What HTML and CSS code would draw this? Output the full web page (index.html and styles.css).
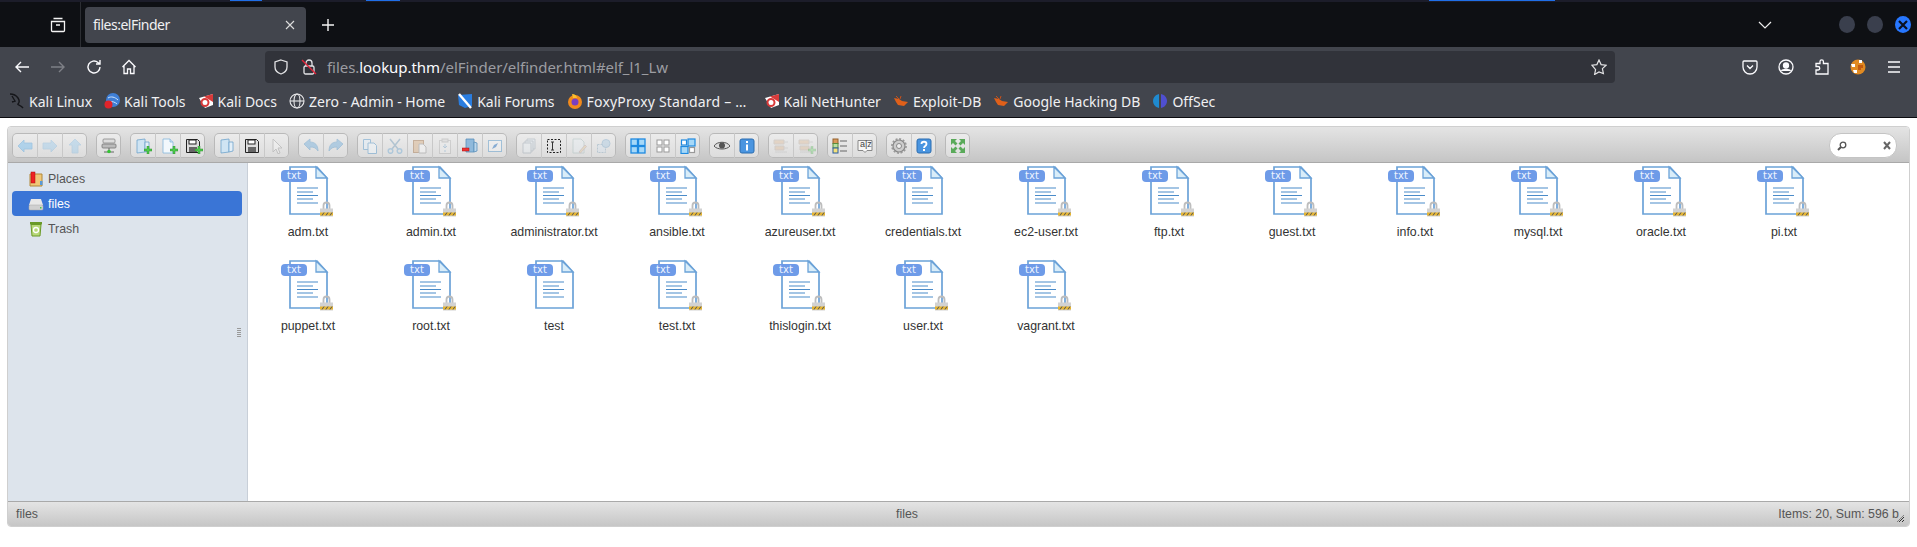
FILE: index.html
```html
<!DOCTYPE html>
<html lang="en">
<head>
    <meta charset="UTF-8">
    <title>files:elFinder</title>
    <link rel="stylesheet" href="styles.css">
</head>
<body>
    <svg class="sprites" aria-hidden="true">
        <symbol id="i-back" viewBox="0 0 16 16"><path d="M1 8l6-6v3h8v6H7v3z" fill="#7cc0f0" stroke="#5aa3dc" stroke-width=".8"/></symbol>
        <symbol id="i-forward" viewBox="0 0 16 16"><path d="M15 8L9 2v3H1v6h8v3z" fill="#7cc0f0" stroke="#5aa3dc" stroke-width=".8"/></symbol>
        <symbol id="i-up" viewBox="0 0 16 16"><path d="M8 1l6 6h-3v8H5V7H2z" fill="#7cc0f0" stroke="#5aa3dc" stroke-width=".8"/></symbol>
        <symbol id="i-net" viewBox="0 0 16 16"><rect x="2" y="1" width="12" height="4" rx="1" fill="#ddd" stroke="#888" stroke-width=".8"/><rect x="1" y="6" width="14" height="4" rx="1" fill="#bbb" stroke="#777" stroke-width=".8"/><path d="M8 10v3M3 14h10" stroke="#666"/><circle cx="8" cy="13.500" r="1.800" fill="#35c435"/></symbol>
        <symbol id="i-plus" viewBox="0 0 8 8"><path d="M3 0h2v3h3v2H5v3H3V5H0V3h3z" fill="#4ccb4c" stroke="#2c8c2c" stroke-width=".5"/></symbol>
        <symbol id="i-folder" viewBox="0 0 16 16"><path d="M2 2l8-1v13l-8 1z" fill="#cfe4f3" stroke="#6ea3cc" stroke-width=".8"/><path d="M10 4h4v9l-4 1z" fill="#e3eff8" stroke="#6ea3cc" stroke-width=".8"/></symbol>
        <symbol id="i-file" viewBox="0 0 16 16"><path d="M3 1h7l3 3v11H3z" fill="#f2f8fc" stroke="#86b6dc" stroke-width=".8"/><path d="M10 1v3h3" fill="#cfe4f3" stroke="#86b6dc" stroke-width=".8"/></symbol>
        <symbol id="i-save" viewBox="0 0 16 16"><path d="M1.500 1.500h11l2 2v11h-13z" fill="#ddd" stroke="#222"/><rect x="4" y="2" width="7" height="4" fill="#fff" stroke="#222"/><rect x="4" y="9" width="8" height="5" fill="#666"/></symbol>
        <symbol id="i-cursor" viewBox="0 0 16 16"><path d="M4 1l9 9H9l2 5-2 .8L7 11l-3 3z" fill="#fff" stroke="#777"/></symbol>
        <symbol id="i-undo" viewBox="0 0 16 16"><path d="M1 6l6-5v3c5 0 8 3 8 9-2-3-4-4-8-4v3z" fill="#7cb2dc" stroke="#5f9ac8" stroke-width=".8"/></symbol>
        <symbol id="i-redo" viewBox="0 0 16 16"><path d="M15 6L9 1v3c-5 0-8 3-8 9 2-3 4-4 8-4v3z" fill="#7cb2dc" stroke="#5f9ac8" stroke-width=".8"/></symbol>
        <symbol id="i-copy" viewBox="0 0 16 16"><path d="M1.500 1.500h7v10h-7z" fill="#e4f0f9" stroke="#5f9ccb"/><path d="M6 5h6l2.500 2.500v8H6z" fill="#f2f8fc" stroke="#5f9ccb"/></symbol>
        <symbol id="i-cut" viewBox="0 0 16 16"><path d="M3 1l8 10M13 1L5 11" stroke="#7fa3bd" stroke-width="1.500" fill="none"/><circle cx="3.500" cy="13" r="2.300" fill="none" stroke="#7fb0d4" stroke-width="1.500"/><circle cx="12.500" cy="13" r="2.300" fill="none" stroke="#7fb0d4" stroke-width="1.500"/></symbol>
        <symbol id="i-paste" viewBox="0 0 16 16"><rect x="1.500" y="2.500" width="10" height="12" fill="#d9b38c" stroke="#a57b52"/><path d="M7 6h4l3 3v6H7z" fill="#f7f7f7" stroke="#999"/></symbol>
        <symbol id="i-dup" viewBox="0 0 16 16"><rect x="2.500" y="2.500" width="11" height="13" fill="#f2f2f2" stroke="#999"/><rect x="5" y="1" width="6" height="3" fill="#ccc" stroke="#888"/><path d="M8 6v3M6 8l2 2 2-2M8 14v-2" stroke="#4f8dbf" fill="none"/></symbol>
        <symbol id="i-rm" viewBox="0 0 16 16"><path d="M4 1h8v13H4z" fill="#8fb9db" stroke="#5a8fba" stroke-width=".8"/><path d="M12 4l3 1v8l-3 1z" fill="#bcd7ec" stroke="#5a8fba" stroke-width=".8"/><rect x="0" y="10" width="7" height="3" fill="#e33" stroke="#a11" stroke-width=".5"/></symbol>
        <symbol id="i-empty" viewBox="0 0 16 16"><rect x="1.500" y="2.500" width="13" height="11" fill="#f5f5f5" stroke="#5f9ccb"/><path d="M5 11l2-4 4-2-2 4z" fill="#2c76c4"/></symbol>
        <symbol id="i-stack" viewBox="0 0 16 16"><path d="M6 1h8v10H6z" fill="#dbe9f4" stroke="#789"/><path d="M4 3h8v10H4z" fill="#dbe9f4" stroke="#789"/><path d="M2 5h8v10H2z" fill="#e8f1f8" stroke="#789"/></symbol>
        <symbol id="i-rename" viewBox="0 0 16 16"><rect x="1.500" y="1.500" width="13" height="13" fill="none" stroke="#222" stroke-dasharray="2 1.500"/><path d="M5 4h3M5 12h3M6.500 4v8" stroke="#333" fill="none"/></symbol>
        <symbol id="i-edit" viewBox="0 0 16 16"><path d="M2 1h8l3 3v11H2z" fill="#e8f1f8" stroke="#8aa"/><path d="M8 14l6-7 1.500 1.500L9.500 15z" fill="#e6c275" stroke="#a88"/></symbol>
        <symbol id="i-resize" viewBox="0 0 16 16"><rect x="1.500" y="6.500" width="8" height="8" fill="#cfe2f1" stroke="#5f8cab" stroke-dasharray="2 1"/><circle cx="10" cy="5.500" r="4" fill="#8fbde0" stroke="#4f8dbf"/></symbol>
        <symbol id="i-gridfull" viewBox="0 0 16 16"><g fill="#a6d8f8" stroke="#1f8ae0" stroke-width="1.300"><rect x="1" y="1" width="6.500" height="6.500"/><rect x="8.500" y="1" width="6.500" height="6.500"/><rect x="1" y="8.500" width="6.500" height="6.500"/><rect x="8.500" y="8.500" width="6.500" height="6.500"/></g></symbol>
        <symbol id="i-gridnone" viewBox="0 0 16 16"><g fill="#fff" stroke="#999"><rect x="2" y="2" width="5" height="5"/><rect x="9" y="2" width="5" height="5"/><rect x="2" y="9" width="5" height="5"/><rect x="9" y="9" width="5" height="5"/></g></symbol>
        <symbol id="i-gridmix" viewBox="0 0 16 16"><g stroke-width="1.200"><rect x="1.500" y="2" width="5" height="5" fill="#fff" stroke="#1f8ae0"/><rect x="8" y="1" width="7" height="7" fill="#a6d8f8" stroke="#1f8ae0"/><rect x="1" y="8.500" width="7" height="7" fill="#a6d8f8" stroke="#1f8ae0"/><rect x="9.500" y="9.500" width="5" height="5" fill="#fff" stroke="#999"/></g></symbol>
        <symbol id="i-eye" viewBox="0 0 16 16"><path d="M0 8c3-5 13-5 16 0-3 4-13 4-16 0z" fill="#ddd" stroke="#555"/><circle cx="8" cy="7.500" r="3" fill="#555"/></symbol>
        <symbol id="i-info" viewBox="0 0 16 16"><rect x="1" y="1" width="14" height="14" rx="2" fill="#4a95e0" stroke="#2a6cb0"/><rect x="7" y="3" width="2" height="2" fill="#fff"/><rect x="7" y="6.500" width="2" height="6" fill="#fff"/></symbol>
        <symbol id="i-help" viewBox="0 0 16 16"><rect x="1" y="1" width="14" height="14" rx="2" fill="#4a95e0" stroke="#2a6cb0"/><path d="M5.500 6c0-3 5-3 5 0 0 2-2.500 2-2.500 4" fill="none" stroke="#fff" stroke-width="1.800"/><rect x="7" y="11" width="2" height="2" fill="#fff"/></symbol>
        <symbol id="i-arc" viewBox="0 0 16 16"><path d="M1 2h10v4H1zM2 8h9v4H2z" fill="#d9a878" stroke="#a98"/><path d="M2 14h12M11 4h4M11 10h4" stroke="#aaa"/></symbol>
        <symbol id="i-list" viewBox="0 0 16 16"><rect x="1" y="1" width="5" height="4.500" fill="#d99a5a" stroke="#94602c"/><rect x="1" y="5.500" width="5" height="4.500" fill="#b8e0a0" stroke="#5a8c3c"/><rect x="1" y="10" width="5" height="5" fill="#f6e27a" stroke="#2a5ca0"/><path d="M8 3h7M8 8h7M8 13h7" stroke="#666" fill="none"/></symbol>
        <symbol id="i-az" viewBox="0 0 16 16"><path d="M1 2.500h14v10H10l-2 2-2-2H1z" fill="#f7f7f7" stroke="#888"/></symbol>
        <symbol id="i-gear" viewBox="0 0 16 16"><circle cx="8" cy="8" r="6" fill="#ccc" stroke="#888" stroke-width="1.200"/><circle cx="8" cy="8" r="7" fill="none" stroke="#999" stroke-width="1.800" stroke-dasharray="2 1.660"/><circle cx="8" cy="8" r="2.500" fill="#eee" stroke="#888"/></symbol>
        <symbol id="i-full" viewBox="0 0 16 16"><g fill="#5aaa5a"><path d="M1 1h6L5 3l2.500 2.500-2 2L3 5 1 7zM15 1v6l-2-2-2.500 2.500-2-2L11 3 9 1zM1 15V9l2 2 2.500-2.500 2 2L5 13l2 2zM15 15H9l2-2-2.500-2.500 2-2L13 11l2-2z"/></g></symbol>
        <symbol id="i-page" viewBox="0 0 56 52">
            <path d="M10 2h27l10 11v36H10z" fill="#fff" stroke="#6ba2d8" stroke-width="1.700"/>
            <path d="M36 2v11h11z" fill="#d9edf9" stroke="#6ba2d8" stroke-width="1.300"/>
            <path d="M17 23h21M17 27h16M17 30.500h21M17 34h16M17 38h21" stroke="#4a8bc9" stroke-width="1.100" fill="none"/>
        </symbol>
        <symbol id="i-lock" viewBox="0 0 13 16">
            <path d="M3.500 8V4.500a3 3 0 0 1 6 0V8" fill="none" stroke="#bdbdbd" stroke-width="1.800"/>
            <rect x="0" y="7.500" width="13" height="8" fill="#d2d2d2"/>
            <path d="M0 11.500h13v3H0z" fill="#e6b530"/>
            <path d="M2 14.500l2-3M6 14.500l2-3M10 14.500l2-3" stroke="#555"/>
        </symbol>
    </svg>

    <div class="topstrip"><i class="seg seg-a"></i><i class="seg seg-b"></i><i class="seg seg-c"></i></div>

    <div class="tabbar">
        <svg class="tabs-btn" width="16" height="16" viewBox="0 0 16 16" fill="none" stroke="#f4f4f4" stroke-width="1.300"><path d="M3.500 1.500h9M1.500 4.500h13v9a1 1 0 0 1-1 1h-11a1 1 0 0 1-1-1zM6 8h4"/></svg>
        <i class="tabs-sep"></i>
        <div class="tab">
            <span class="tab-title">files:elFinder</span>
            <svg class="tab-x" width="10" height="10" viewBox="0 0 10 10" stroke="#ddd" stroke-width="1.100"><path d="M1 1l8 8M9 1l-8 8"/></svg>
        </div>
        <svg class="newtab" width="14" height="14" viewBox="0 0 14 14" stroke="#f4f4f4" stroke-width="1.400"><path d="M7 1v12M1 7h12"/></svg>
        <svg class="chevron" width="14" height="8" viewBox="0 0 14 8" fill="none" stroke="#eee" stroke-width="1.200"><path d="M1 1l6 6 6-6"/></svg>
        <div class="winbtns">
            <i class="winbtn"></i>
            <i class="winbtn"></i>
            <i class="winbtn winbtn-close"><svg width="10" height="10" viewBox="0 0 10 10" stroke="#0a1020" stroke-width="2.200"><path d="M1 1l8 8M9 1l-8 8"/></svg></i>
        </div>
    </div>

    <div class="navbar">
        <svg class="nav-ic ic-back" viewBox="0 0 16 16" fill="none" stroke="#fbfbfe" stroke-width="1.400"><path d="M15 8H2M7 3L2 8l5 5"/></svg>
        <svg class="nav-ic ic-fwd" viewBox="0 0 16 16" fill="none" stroke="#7e8087" stroke-width="1.400"><path d="M1 8h13M9 3l5 5-5 5"/></svg>
        <svg class="nav-ic ic-reload" viewBox="0 0 16 16" fill="none" stroke="#fbfbfe" stroke-width="1.400"><path d="M14 8a6 6 0 1 1-2-4.500L14 5M14 1v4h-4"/></svg>
        <svg class="nav-ic ic-home" viewBox="0 0 16 16" fill="none" stroke="#fbfbfe" stroke-width="1.300"><path d="M1.500 8L8 1.500 14.500 8M3 7v7.500h3.500V10h3v4.500H13V7"/></svg>
        <div class="urlbar">
            <svg class="url-ic" viewBox="0 0 16 16" fill="none" stroke="#e4e4e6" stroke-width="1.300"><path d="M8 1l6 2v5c0 3.500-3 6-6 7-3-1-6-3.500-6-7V3z"/></svg>
            <svg class="url-ic url-lock" viewBox="0 0 16 16" fill="none" stroke="#e4e4e6" stroke-width="1.300"><rect x="3" y="7" width="10" height="8" rx="1.500"/><path d="M5 7V4a3 3 0 0 1 6 0v3"/><path d="M1 1l14 14" stroke="#e0243a" stroke-width="1.400"/></svg>
            <div class="url-text">files.<b>lookup.thm</b>/elFinder/elfinder.html#elf_l1_Lw</div>
            <svg class="url-star" viewBox="0 0 16 16" fill="none" stroke="#e4e4e6" stroke-width="1.200"><path d="M8 1l2.100 4.600 5 .6-3.700 3.400 1 4.900L8 13l-4.400 2.500 1-4.900L.9 6.200l5-.6z"/></svg>
        </div>
        <svg class="nav-ic ic-pocket" viewBox="0 0 16 16" fill="none" stroke="#fbfbfe" stroke-width="1.300"><path d="M2 2h12a1 1 0 0 1 1 1v5a7 7 0 0 1-14 0V3a1 1 0 0 1 1-1zM5 6.500l3 3 3-3"/></svg>
        <svg class="nav-ic ic-account" viewBox="0 0 16 16" fill="none" stroke="#fbfbfe" stroke-width="1.300"><circle cx="8" cy="8" r="7"/><circle cx="8" cy="6.500" r="2.500" fill="#fbfbfe"/><path d="M3.500 12c1-2 8-2 9 0" fill="#fbfbfe"/></svg>
        <svg class="nav-ic ic-ext" viewBox="0 0 16 16" fill="none" stroke="#fbfbfe" stroke-width="1.300"><path d="M2 15V11h2a1.500 1.500 0 0 0 0-3.500H2V4.500h4V2.500a1.700 1.700 0 0 1 3.400 0v2H14V15z"/></svg>
        <svg class="nav-ic ic-fox" viewBox="0 0 16 16"><circle cx="8" cy="8" r="7.500" fill="#e08a22"/><path d="M1 5h4v3H2zM3 11h4v3H4zM9 1h3v3H9z" fill="#fff"/><path d="M8 6h5v3h-2v2H8z" fill="#c25a10"/></svg>
        <svg class="nav-ic ic-menu" viewBox="0 0 16 16" stroke="#fbfbfe" stroke-width="1.300"><path d="M2 3h12M2 8h12M2 13h12"/></svg>
    </div>

    <div class="bookmarks">
        <a class="bm"><svg class="fav" viewBox="0 0 16 16" fill="none" stroke="#15161a" stroke-width="1.400"><path d="M1 1c4 0 6 1 8 4s1 5 0 6 3 1 5 4M3 3l3 5-3 1"/></svg>Kali Linux</a>
        <a class="bm"><svg class="fav" viewBox="0 0 16 16"><circle cx="9" cy="7" r="7" fill="#3f7fd6"/><path d="M4 5c3-2 7-1 10 2M5 9c3-1 6 0 8 2" stroke="#cfe3fa" fill="none"/><circle cx="4.500" cy="11.500" r="4" fill="#e0242a"/></svg>Kali Tools</a>
        <a class="bm"><svg class="fav" viewBox="0 0 16 16"><path d="M1 5l14-4v11l-8 3z" fill="#fff"/><path d="M6 3.500L15 1v8z" fill="#d83a3a"/><circle cx="7" cy="9.500" r="3.500" fill="none" stroke="#d83a3a" stroke-width="2"/></svg>Kali Docs</a>
        <a class="bm"><svg class="fav" viewBox="0 0 16 16" fill="none" stroke="#e8e8ea" stroke-width="1.100"><circle cx="8" cy="8" r="7"/><ellipse cx="8" cy="8" rx="3" ry="7"/><path d="M1 8h14"/></svg>Zero - Admin - Home</a>
        <a class="bm"><svg class="fav" viewBox="0 0 16 16"><path d="M1 2l14-1v12l-7 2-6-3z" fill="#2a7de0"/><path d="M2 1l12 14" stroke="#fff" stroke-width="2.400"/></svg>Kali Forums</a>
        <a class="bm bm-foxy"><svg class="fav" viewBox="0 0 16 16"><circle cx="8" cy="9" r="7" fill="#f28a1c"/><path d="M5 1c3 0 5 2 5 4H6z" fill="#fbbe2c"/><circle cx="8" cy="9" r="3.500" fill="#7a3fc0"/></svg>FoxyProxy Standard – …</a>
        <a class="bm bm-hunter"><svg class="fav" viewBox="0 0 16 16"><path d="M1 5l14-4v11l-8 3z" fill="#fff"/><path d="M6 3.500L15 1v8z" fill="#d83a3a"/><circle cx="7" cy="9.500" r="3.500" fill="none" stroke="#d83a3a" stroke-width="2"/></svg>Kali NetHunter</a>
        <a class="bm"><svg class="fav" viewBox="0 0 16 16"><path d="M1 5l5 1 3 2 6 1-4 4-6-1-2-3z" fill="#e0601a"/><path d="M3 3l3 3M8 3L7 6" stroke="#c8501a"/></svg>Exploit-DB</a>
        <a class="bm"><svg class="fav" viewBox="0 0 16 16"><path d="M1 5l5 1 3 2 6 1-4 4-6-1-2-3z" fill="#e0601a"/><path d="M3 3l3 3M8 3L7 6" stroke="#c8501a"/></svg>Google Hacking DB</a>
        <a class="bm"><svg class="fav" viewBox="0 0 16 16"><path d="M7 1C3 2 1 5 1 8s2 6 6 7z" fill="#1f8ad0"/><path d="M9 1c4 1 6 4 6 7s-2 6-6 7z" fill="#4f4fd0"/></svg>OffSec</a>
    </div>

    <main class="page">
        <div class="elfinder">
            <div class="toolbar">
                <div class="tb-group">
                    <span class="tb-btn dim"><svg><use href="#i-back"/></svg></span>
                    <span class="tb-btn off"><svg><use href="#i-forward"/></svg></span>
                    <span class="tb-btn off"><svg><use href="#i-up"/></svg></span>
                </div>
                <div class="tb-group">
                    <span class="tb-btn"><svg><use href="#i-net"/></svg></span>
                </div>
                <div class="tb-group">
                    <span class="tb-btn plus"><svg><use href="#i-folder"/></svg><svg class="badge-plus"><use href="#i-plus"/></svg></span>
                    <span class="tb-btn plus"><svg><use href="#i-file"/></svg><svg class="badge-plus"><use href="#i-plus"/></svg></span>
                    <span class="tb-btn plus"><svg><use href="#i-save"/></svg><svg class="badge-plus"><use href="#i-plus"/></svg></span>
                </div>
                <div class="tb-group">
                    <span class="tb-btn"><svg><use href="#i-folder"/></svg></span>
                    <span class="tb-btn"><svg><use href="#i-save"/></svg></span>
                    <span class="tb-btn off"><svg><use href="#i-cursor"/></svg></span>
                </div>
                <div class="tb-group">
                    <span class="tb-btn dim"><svg><use href="#i-undo"/></svg></span>
                    <span class="tb-btn dim"><svg><use href="#i-redo"/></svg></span>
                </div>
                <div class="tb-group">
                    <span class="tb-btn dim"><svg><use href="#i-copy"/></svg></span>
                    <span class="tb-btn dim"><svg><use href="#i-cut"/></svg></span>
                    <span class="tb-btn dim"><svg><use href="#i-paste"/></svg></span>
                    <span class="tb-btn off"><svg><use href="#i-dup"/></svg></span>
                    <span class="tb-btn"><svg><use href="#i-rm"/></svg></span>
                    <span class="tb-btn dim"><svg><use href="#i-empty"/></svg></span>
                </div>
                <div class="tb-group">
                    <span class="tb-btn off"><svg><use href="#i-stack"/></svg></span>
                    <span class="tb-btn"><svg><use href="#i-rename"/></svg></span>
                    <span class="tb-btn off"><svg><use href="#i-edit"/></svg></span>
                    <span class="tb-btn off"><svg><use href="#i-resize"/></svg></span>
                </div>
                <div class="tb-group">
                    <span class="tb-btn"><svg><use href="#i-gridfull"/></svg></span>
                    <span class="tb-btn"><svg><use href="#i-gridnone"/></svg></span>
                    <span class="tb-btn"><svg><use href="#i-gridmix"/></svg></span>
                </div>
                <div class="tb-group">
                    <span class="tb-btn"><svg><use href="#i-eye"/></svg></span>
                    <span class="tb-btn"><svg><use href="#i-info"/></svg></span>
                </div>
                <div class="tb-group">
                    <span class="tb-btn off"><svg><use href="#i-arc"/></svg></span>
                    <span class="tb-btn off plus"><svg><use href="#i-arc"/></svg><svg class="badge-plus"><use href="#i-plus"/></svg></span>
                </div>
                <div class="tb-group">
                    <span class="tb-btn"><svg><use href="#i-list"/></svg></span>
                    <span class="tb-btn az"><svg><use href="#i-az"/></svg><em>a|z</em></span>
                </div>
                <div class="tb-group">
                    <span class="tb-btn"><svg><use href="#i-gear"/></svg></span>
                    <span class="tb-btn"><svg><use href="#i-help"/></svg></span>
                </div>
                <div class="tb-group">
                    <span class="tb-btn"><svg><use href="#i-full"/></svg></span>
                </div>
                <div class="search">
                    <svg width="10" height="10" viewBox="0 0 10 10" fill="none" stroke="#555" stroke-width="1.300"><circle cx="6" cy="4" r="2.800"/><path d="M4 6L1 9" stroke-width="2"/></svg>
                    <svg width="8" height="9" viewBox="0 0 8 9" stroke="#666" stroke-width="2"><path d="M1 1l6 7M7 1L1 8"/></svg>
                </div>
            </div>

            <div class="workzone">
                <nav class="sidebar">
                    <div class="tree-row">
                        <svg class="tree-ic" viewBox="0 0 16 16"><path d="M2 3h12v12H2z" fill="#f0c878" stroke="#b08838"/><rect x="3" y="1" width="4" height="11" fill="#e22" stroke="#a11" stroke-width=".5"/><rect x="12" y="10" width="2.500" height="4" fill="#5a9ad8"/></svg>
                        Places
                    </div>
                    <div class="tree-row is-active">
                        <svg class="tree-ic" viewBox="0 0 16 16"><path d="M3 3h10l2 6H1z" fill="#e8e8e8"/><rect x="1" y="9" width="14" height="5" rx="1" fill="#d0d0d0" stroke="#aaa" stroke-width=".5"/><rect x="12" y="11" width="1.500" height="1.500" fill="#4c4"/></svg>
                        files
                    </div>
                    <div class="tree-row">
                        <svg class="tree-ic" viewBox="0 0 16 16"><path d="M2 1h12v2.500H2z" fill="#6a9a28"/><path d="M3 3.500h10l-1 11.500H4z" fill="#b8d878" stroke="#6a9a28"/><circle cx="8" cy="9" r="2.500" fill="none" stroke="#fff" stroke-width="1.300"/></svg>
                        Trash
                    </div>
                    <i class="grip"></i>
                </nav>

                <section class="cwd">
                    <div class="file"><div class="file-ic"><svg class="page-ic"><use href="#i-page"/></svg><span class="kind">txt</span><svg class="lock-ic"><use href="#i-lock"/></svg></div><div class="file-name">adm.txt</div></div>
                    <div class="file"><div class="file-ic"><svg class="page-ic"><use href="#i-page"/></svg><span class="kind">txt</span><svg class="lock-ic"><use href="#i-lock"/></svg></div><div class="file-name">admin.txt</div></div>
                    <div class="file"><div class="file-ic"><svg class="page-ic"><use href="#i-page"/></svg><span class="kind">txt</span><svg class="lock-ic"><use href="#i-lock"/></svg></div><div class="file-name">administrator.txt</div></div>
                    <div class="file"><div class="file-ic"><svg class="page-ic"><use href="#i-page"/></svg><span class="kind">txt</span><svg class="lock-ic"><use href="#i-lock"/></svg></div><div class="file-name">ansible.txt</div></div>
                    <div class="file"><div class="file-ic"><svg class="page-ic"><use href="#i-page"/></svg><span class="kind">txt</span><svg class="lock-ic"><use href="#i-lock"/></svg></div><div class="file-name">azureuser.txt</div></div>
                    <div class="file"><div class="file-ic"><svg class="page-ic"><use href="#i-page"/></svg><span class="kind">txt</span></div><div class="file-name">credentials.txt</div></div>
                    <div class="file"><div class="file-ic"><svg class="page-ic"><use href="#i-page"/></svg><span class="kind">txt</span><svg class="lock-ic"><use href="#i-lock"/></svg></div><div class="file-name">ec2-user.txt</div></div>
                    <div class="file"><div class="file-ic"><svg class="page-ic"><use href="#i-page"/></svg><span class="kind">txt</span><svg class="lock-ic"><use href="#i-lock"/></svg></div><div class="file-name">ftp.txt</div></div>
                    <div class="file"><div class="file-ic"><svg class="page-ic"><use href="#i-page"/></svg><span class="kind">txt</span><svg class="lock-ic"><use href="#i-lock"/></svg></div><div class="file-name">guest.txt</div></div>
                    <div class="file"><div class="file-ic"><svg class="page-ic"><use href="#i-page"/></svg><span class="kind">txt</span><svg class="lock-ic"><use href="#i-lock"/></svg></div><div class="file-name">info.txt</div></div>
                    <div class="file"><div class="file-ic"><svg class="page-ic"><use href="#i-page"/></svg><span class="kind">txt</span><svg class="lock-ic"><use href="#i-lock"/></svg></div><div class="file-name">mysql.txt</div></div>
                    <div class="file"><div class="file-ic"><svg class="page-ic"><use href="#i-page"/></svg><span class="kind">txt</span><svg class="lock-ic"><use href="#i-lock"/></svg></div><div class="file-name">oracle.txt</div></div>
                    <div class="file"><div class="file-ic"><svg class="page-ic"><use href="#i-page"/></svg><span class="kind">txt</span><svg class="lock-ic"><use href="#i-lock"/></svg></div><div class="file-name">pi.txt</div></div>
                    <div class="file"><div class="file-ic"><svg class="page-ic"><use href="#i-page"/></svg><span class="kind">txt</span><svg class="lock-ic"><use href="#i-lock"/></svg></div><div class="file-name">puppet.txt</div></div>
                    <div class="file"><div class="file-ic"><svg class="page-ic"><use href="#i-page"/></svg><span class="kind">txt</span><svg class="lock-ic"><use href="#i-lock"/></svg></div><div class="file-name">root.txt</div></div>
                    <div class="file"><div class="file-ic"><svg class="page-ic"><use href="#i-page"/></svg><span class="kind">txt</span></div><div class="file-name">test</div></div>
                    <div class="file"><div class="file-ic"><svg class="page-ic"><use href="#i-page"/></svg><span class="kind">txt</span><svg class="lock-ic"><use href="#i-lock"/></svg></div><div class="file-name">test.txt</div></div>
                    <div class="file"><div class="file-ic"><svg class="page-ic"><use href="#i-page"/></svg><span class="kind">txt</span><svg class="lock-ic"><use href="#i-lock"/></svg></div><div class="file-name">thislogin.txt</div></div>
                    <div class="file"><div class="file-ic"><svg class="page-ic"><use href="#i-page"/></svg><span class="kind">txt</span><svg class="lock-ic"><use href="#i-lock"/></svg></div><div class="file-name">user.txt</div></div>
                    <div class="file"><div class="file-ic"><svg class="page-ic"><use href="#i-page"/></svg><span class="kind">txt</span><svg class="lock-ic"><use href="#i-lock"/></svg></div><div class="file-name">vagrant.txt</div></div>
                </section>
            </div>

            <div class="statusbar">
                <span>files</span>
                <span class="stat-mid">files</span>
                <span class="stat-size">Items: 20, Sum: 596 b</span>
                <i class="resize-grip"></i>
            </div>
        </div>
    </main>
</body>
</html>
```

FILE: styles.css
```css
* {
    box-sizing: border-box;
}
html, body {
    height: 100%;
}
body {
    margin: 0;
    overflow: hidden;
    background: #fff;
    font-family: "Liberation Sans", sans-serif;
}
.sprites {
    display: none;
}
svg {
    display: block;
    flex: none;
}

/* browser chrome */
.topstrip {
    display: flex;
    height: 2px;
    background: #1c1d2a;
}
.seg {
    display: block;
    height: 1px;
    background: #1f6fe8;
}
.seg-a { margin-left: 230px; width: 32px; }
.seg-b { margin-left: 104px; width: 34px; }
.seg-c { margin-left: 1029px; width: 126px; }

.tabbar {
    display: flex;
    align-items: center;
    height: 45px;
    background: #0e1014;
    font-family: "Noto Sans", sans-serif;
}
.tabs-btn {
    margin-left: 50px;
}
.tabs-sep {
    display: block;
    width: 1px;
    height: 45px;
    margin-left: 14px;
    background: #2c2e33;
}
.tab {
    display: flex;
    align-items: center;
    justify-content: space-between;
    width: 221px;
    height: 36px;
    margin-left: 4px;
    padding: 0 11px 0 8px;
    border-radius: 4px;
    background: #42454d;
    color: #f0f0f2;
    font-size: 14px;
}
.tab-title {
    letter-spacing: -.5px;
}
.newtab {
    margin-left: 15px;
}
.chevron {
    margin-left: 1423px;
}
.winbtns {
    display: flex;
    gap: 12px;
    margin-left: 67px;
}
.winbtn {
    display: flex;
    align-items: center;
    justify-content: center;
    width: 16px;
    height: 17px;
    border-radius: 50%;
    background: #3a3f4d;
}
.winbtn-close {
    background: #2777ff;
}

.navbar {
    display: flex;
    align-items: flex-start;
    height: 40px;
    padding-top: 4px;
    background: #42454d;
}
.nav-ic {
    width: 16px;
    height: 16px;
    margin-top: 8px;
}
.ic-back { margin-left: 14px; }
.ic-fwd { margin-left: 20px; }
.ic-reload { margin-left: 20px; }
.ic-home { margin-left: 19px; }
.ic-pocket { margin-left: 127px; }
.ic-account { margin-left: 20px; }
.ic-ext { margin-left: 20px; }
.ic-fox { margin-left: 20px; }
.ic-menu { margin-left: 20px; }

.urlbar {
    display: flex;
    align-items: center;
    width: 1350px;
    height: 32px;
    margin-left: 128px;
    border-radius: 4px;
    background: #31333a;
}
.url-ic {
    width: 16px;
    height: 16px;
    margin-left: 8px;
}
.url-lock {
    margin-left: 12px;
}
.url-text {
    flex: 1;
    margin-left: 10px;
    color: #9c9da2;
    font: 15px "Noto Sans", sans-serif;
    letter-spacing: -.05px;
}
.url-text b {
    color: #fbfbfe;
    font-weight: 400;
}
.url-star {
    width: 16px;
    height: 16px;
    margin-right: 8px;
}

.bookmarks {
    display: flex;
    align-items: center;
    gap: 12px;
    height: 31px;
    padding: 0 0 2px 9px;
    border-bottom: 1px solid #0c0c10;
    background: #42454d;
    color: #f0f0f2;
    font: 14px "Noto Sans", sans-serif;
}
.bm {
    display: flex;
    align-items: center;
    gap: 4px;
    white-space: nowrap;
}
.bm-foxy {
    letter-spacing: .2px;
}
.bm-hunter {
    margin-left: 5px;
}
.fav {
    width: 16px;
    height: 16px;
}

/* elfinder */
.page {
    padding: 8px 7px 0;
}
.elfinder {
    position: relative;
    display: flex;
    flex-direction: column;
    height: 401px;
    border: 1px solid #cfcfcf;
    border-radius: 4px;
    overflow: hidden;
    background: #fff;
}
.toolbar {
    display: flex;
    flex: none;
    gap: 9px;
    height: 36px;
    padding: 6px 12px 0 4px;
    border-bottom: 1px solid #a9a9a9;
    background: linear-gradient(#e4e4e4, #c5c5c5);
}
.tb-group {
    display: flex;
    height: 25px;
    border-radius: 5px;
    overflow: hidden;
    box-shadow: inset 0 0 0 1px #b9b9b9;
    background: linear-gradient(#ececec, #dcdcdc);
}
.tb-btn {
    position: relative;
    display: flex;
    align-items: center;
    justify-content: center;
    width: 25px;
    height: 25px;
    border-left: 1px solid #c8c8c8;
}
.tb-btn:first-child {
    border-left: 0;
}
.tb-btn svg {
    width: 16px;
    height: 16px;
}
.tb-btn.off svg {
    opacity: .3;
}
.tb-btn.dim svg {
    opacity: .5;
}
.tb-btn .badge-plus {
    position: absolute;
    left: 14px;
    top: 13px;
    width: 8px;
    height: 8px;
}
.tb-btn.az em {
    position: absolute;
    color: #444;
    font: 9px "Liberation Sans", sans-serif;
    top: 6px;
    left: 7px;
}
.search {
    display: flex;
    align-items: center;
    justify-content: space-between;
    width: 68px;
    height: 25px;
    margin-left: auto;
    padding: 0 5px 0 7px;
    border: 1px solid #c4c4c4;
    border-radius: 12px;
    background: #fff;
}

.workzone {
    display: flex;
    flex: 1;
    min-height: 0;
}
.sidebar {
    position: relative;
    flex: none;
    width: 240px;
    padding: 3px 5px 0 4px;
    border-right: 1px solid #c8cfd8;
    background: #dde4ec;
    color: #555;
    font-size: 12.35px;
}
.tree-row {
    display: flex;
    align-items: center;
    height: 25px;
    padding-left: 16px;
    border-radius: 4px;
}
.tree-row.is-active {
    background: #3a75d6;
    color: #fff;
}
.tree-ic {
    width: 16px;
    height: 16px;
    margin-right: 4px;
}
.grip {
    position: absolute;
    right: 6px;
    top: 165px;
    width: 4px;
    height: 9px;
    background: repeating-linear-gradient(#999 0 1px, #dde4ec 1px 2px);
}

.cwd {
    display: grid;
    flex: 1;
    grid-template-columns: repeat(13, 120px);
    column-gap: 3px;
    grid-auto-rows: 94px;
    align-content: start;
    background: #fff;
}
.file {
    padding-top: 2px;
    text-align: center;
    color: #333;
    font-size: 12.35px;
}
.file-ic {
    position: relative;
    width: 56px;
    height: 52px;
    margin: 0 auto 7px;
}
.page-ic {
    width: 56px;
    height: 52px;
}
.kind {
    position: absolute;
    left: 1px;
    top: 5px;
    width: 26px;
    height: 12px;
    border-radius: 4px;
    background: #6e9be8;
    color: #eef4ff;
    font: 10px/12px "DejaVu Sans", sans-serif;
}
.lock-ic {
    position: absolute;
    left: 40px;
    top: 36px;
    width: 13px;
    height: 16px;
}
.file-name {
    white-space: nowrap;
    height: 16px;
    line-height: 16px;
}

.statusbar {
    position: relative;
    display: grid;
    flex: none;
    grid-template-columns: 866px 50px 1fr;
    align-items: center;
    height: 25px;
    padding: 0 10px 0 8px;
    border-top: 1px solid #a9a9a9;
    background: linear-gradient(#e4e4e4, #c6c6c6);
    color: #555;
    font-size: 12.35px;
}
.stat-mid {
    text-align: center;
}
.stat-size {
    text-align: right;
}
.resize-grip {
    position: absolute;
    right: 5px;
    bottom: 4px;
    width: 7px;
    height: 7px;
    background: repeating-linear-gradient(135deg, #333 0 1px, transparent 1px 2px);
    clip-path: polygon(100% 0, 100% 100%, 0 100%);
}
```
